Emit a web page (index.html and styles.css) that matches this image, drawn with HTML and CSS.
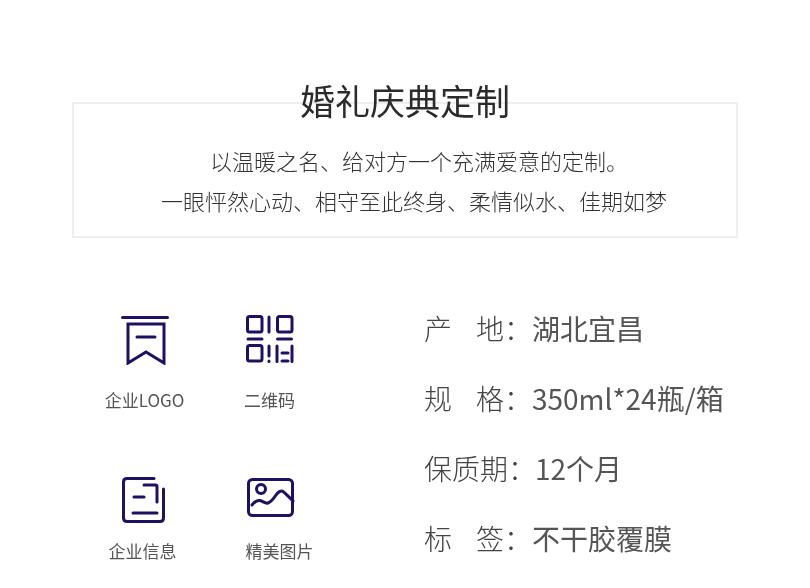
FILE: index.html
```html
<!DOCTYPE html>
<html lang="zh">
<head>
<meta charset="utf-8">
<title>婚礼庆典定制</title>
<link rel="stylesheet" href="styles.css">
</head>
<body>
<main class="page">
  <section class="intro">
    <h1 class="intro-title">婚礼庆典定制</h1>
    <div class="intro-box">
      <p class="intro-line intro-line-first">以温暖之名、给对方一个充满爱意的定制。</p>
      <p class="intro-line intro-line-second">一眼怦然心动、相守至此终身、柔情似水、佳期如梦</p>
    </div>
  </section>
  <section class="details">
    <div class="features">
      <div class="feature">
        <svg class="icon" width="50" height="50" viewBox="0 0 50 50"><path d="M2.500 2.500h45M8 9h36v39L26 37 8 48zM17 22h18"/></svg>
        <span class="feature-label">企业LOGO</span>
      </div>
      <div class="feature">
        <svg class="icon" width="50" height="50" viewBox="0 0 50 50"><rect x="2.500" y="1.500" width="14.500" height="15.500" rx="2"/><rect x="32.500" y="1.500" width="14.500" height="15.500" rx="2"/><rect x="2.500" y="30.500" width="14.500" height="15.500" rx="2"/><path d="M24 2v15M3 24h14M32.500 24h14M24 31v10M24 46v.5M32 31v15.500M47 31v15.500M37 38h6M37 46h6"/></svg>
        <span class="feature-label">二维码</span>
      </div>
      <div class="feature">
        <svg class="icon" width="50" height="50" viewBox="0 0 50 50"><path d="M34 3.500H7Q3.500 3.500 3.500 7v36q0 3.500 3.500 3.500h33q3.500 0 3.500-3.500V14M24 10h11.500q1.500 0 1.500 1.500V27M14 22h10M13 38h24"/></svg>
        <span class="feature-label feature-label-tight feature-label-left">企业信息</span>
      </div>
      <div class="feature">
        <svg class="icon" width="50" height="50" viewBox="0 0 50 50"><rect x="3.500" y="4.500" width="44" height="36" rx="4"/><circle cx="16" cy="14" r="4.500"/><path d="M7 30C10 26 12 25 15 25.500S20 29 23 28 29 23 31 20 36 15 38 16.500 45 23 48 26"/></svg>
        <span class="feature-label feature-label-tight feature-label-right">精美图片</span>
      </div>
    </div>
    <dl class="specs">
      <div class="spec"><dt class="spec-key"><span class="spec-gap">产</span>地：</dt><dd class="spec-value">湖北宜昌</dd></div>
      <div class="spec"><dt class="spec-key"><span class="spec-gap">规</span>格：</dt><dd class="spec-value">350ml*24瓶/箱</dd></div>
      <div class="spec"><dt class="spec-key">保质期：</dt><dd class="spec-value spec-value-offset">12个月</dd></div>
      <div class="spec"><dt class="spec-key"><span class="spec-gap">标</span>签：</dt><dd class="spec-value">不干胶覆膜</dd></div>
    </dl>
  </section>
</main>
</body>
</html>
```

FILE: styles.css
```css
* { box-sizing: border-box; }
html, body { margin: 0; padding: 0; background: #fff; }
body {
  width: 810px;
  height: 588px;
  overflow: hidden;
  font-family: "Noto Sans CJK SC", "Noto Sans", sans-serif;
}
.page { padding: 76px 72px 0; will-change: transform; }
.intro { display: flex; flex-direction: column; align-items: center; }
.intro-title {
  position: relative;
  z-index: 1;
  margin: 0 0 -22px;
  padding: 0;
  font-size: 35px;
  line-height: 48px;
  font-weight: 400;
  color: #2b2b2b;
}
.intro-box {
  width: 666px;
  height: 136px;
  border: 2px solid #eee;
  padding: 40px 0 0;
  display: flex;
  flex-direction: column;
  gap: 8px;
}
.intro-line {
  margin: 0;
  font-size: 22px;
  line-height: 32px;
  font-weight: 300;
  color: #333;
  white-space: nowrap;
}
.intro-line-first { padding-left: 136px; }
.intro-line-second { padding-left: 87px; }
.details { display: flex; margin-top: 77px; }
.features {
  width: 352px;
  display: grid;
  grid-template-columns: 125px 125px;
  row-gap: 63px;
  padding-left: 10px;
  align-content: start;
}
.feature { display: flex; flex-direction: column; align-items: center; }
.icon {
  display: block;
  fill: none;
  stroke: #1f1060;
  stroke-width: 3;
  stroke-linecap: round;
  stroke-linejoin: miter;
}
.feature-label {
  margin-top: 23px;
  font-size: 17px;
  line-height: 24px;
  color: #555;
  white-space: nowrap;
}
.feature-label-tight { margin-top: 14px; }
.feature-label-left { margin-right: 4px; }
.feature-label-right { margin-left: 20px; }
.specs { margin: -7px 0 0; display: flex; flex-direction: column; gap: 30px; }
.spec { display: flex; font-size: 28px; line-height: 40px; color: #555; }
.spec-key { margin: 0; width: 108px; font-weight: 300; color: #444; white-space: nowrap; }
.spec-gap { letter-spacing: 24px; }
.spec-value { margin: 0; }
.spec-value-offset { margin-left: 3px; }
```
